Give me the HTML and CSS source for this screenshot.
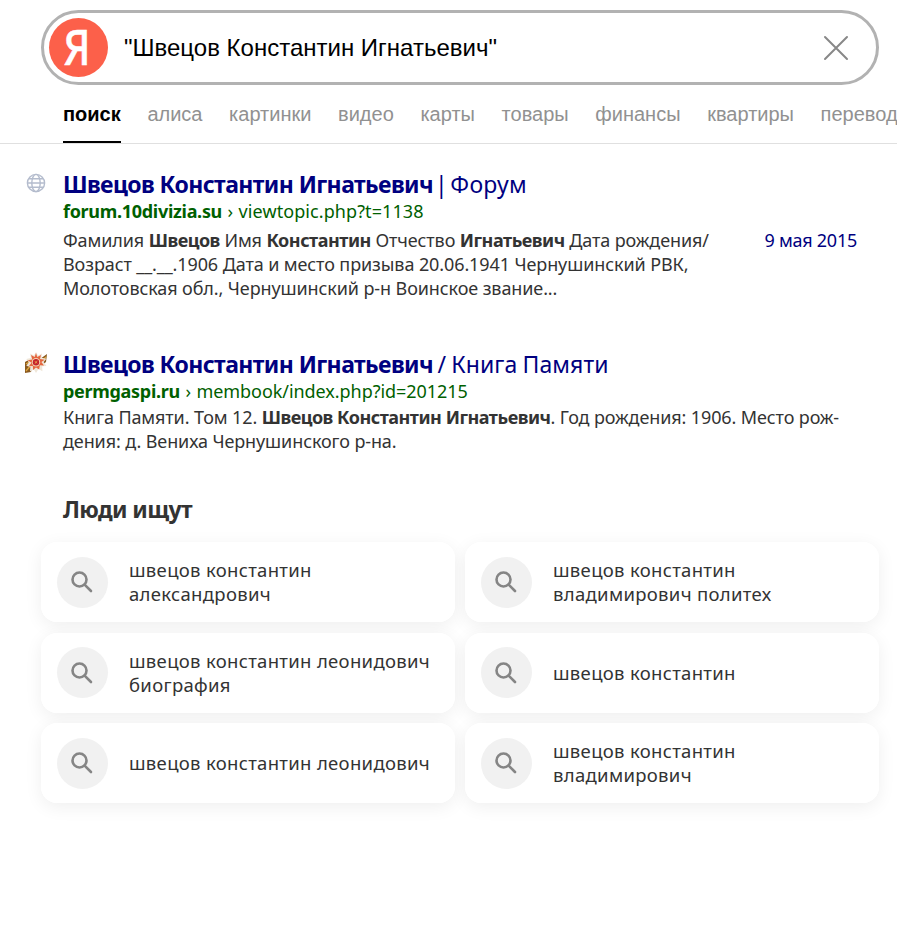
FILE: index.html
```html
<!DOCTYPE html>
<html lang="ru">
<head>
<meta charset="utf-8">
<title>Поиск</title>
<link rel="stylesheet" href="styles.css">
</head>
<body>
<svg width="0" height="0" class="defs"><symbol id="lens" viewBox="0 0 24 24"><circle cx="9.500" cy="9.500" r="7"/><path d="M14.600 14.600 21 21"/></symbol></svg>
<header>
  <div class="search">
    <div class="logo"><span>Я</span></div>
    <div class="query">"Швецов Константин Игнатьевич"</div>
    <svg class="close" viewBox="0 0 26 26"><path d="M2 2 24 24M24 2 2 24"/></svg>
  </div>
  <nav><a class="active">поиск</a><a>алиса</a><a>картинки</a><a>видео</a><a>карты</a><a>товары</a><a>финансы</a><a>квартиры</a><a>перевод</a></nav>
</header>
<main>
  <article class="result">
    <svg class="favicon globe" viewBox="0 0 24 24"><circle cx="12" cy="12" r="8.6"/><ellipse cx="12" cy="12" rx="4.2" ry="8.6"/><path d="M3.500 12h17M5 7.800h14M5 16.200h14"/></svg>
    <div class="body">
      <h2><b>Швецов Константин Игнатьевич</b> <span class="t1">| Форум</span></h2>
      <div class="url"><b>forum.10divizia.su</b><i>›</i><span class="path-a">viewtopic.php?t=1138</span></div>
      <div class="row">
        <p class="snippet"><span class="s1">Фамилия <b>Швецов</b> Имя <b>Константин</b> Отчество <b>Игнатьевич</b> Дата рождения/</span><br><span class="s2">Возраст __.__.1906 Дата и место призыва 20.06.1941 Чернушинский РВК,</span><br><span class="s2">Молотовская обл., Чернушинский р-н Воинское звание...</span></p>
        <time>9 мая 2015</time>
      </div>
    </div>
  </article>
  <article class="result compact">
    <svg class="favicon" viewBox="0 0 24 24">
      <path d="M1 11 6 8l3 6-2 7-6 1zM16 8l7-5-1 8-6 5z" fill="#8a5a20"/>
      <path d="M2 13l5-3M2 20l6-7M17 11l5-5" stroke="#dda53d" stroke-width="1.3"/>
      <path d="M12 1l2 3.500 4-2-.4 4.200 4.700 1-2.700 3.300 2.900 3.900-4.300.4.200 5-3.900-2.300L12 22l-2-3.500L6 20.500l.3-4.500-4-1.300 2.600-3.400L2.200 8l4.600-1-.8-4.500 4 2z" fill="#efe6d8"/>
      <path d="M12 2l1.300 4 3.700-2-1 4 4.700.8-3.300 2.300 2.600 3.300-4.200-.1-.6 4.200L12 16.500l-2.900 2.500-.3-4-4 .2 2.700-3.500L3.700 9.200l4.600-.7-1.300-4.500 3.700 2z" fill="#e5663f"/>
      <circle cx="12" cy="11.300" r="4.200" fill="#f2d7b4"/><circle cx="12" cy="11.300" r="3.200" fill="#c3202c"/>
      <path d="M10.800 12.500l2.500-2.400M11 10.300l2 2" stroke="#f0b14b" stroke-width=".9"/>
    </svg>
    <div class="body">
      <h2><b>Швецов Константин Игнатьевич</b> <span class="t2">/ Книга Памяти</span></h2>
      <div class="url"><b>permgaspi.ru</b><i>›</i><span class="path-b">membook/index.php?id=201215</span></div>
      <p class="snippet"><span class="s1">Книга Памяти. Том 12. <b>Швецов Константин Игнатьевич</b>. Год рождения: 1906. Место рож-</span><br><span class="s2">дения: д. Вениха Чернушинского р-на.</span></p>
    </div>
  </article>
  <h3>Люди ищут</h3>
  <div class="grid">
    <a class="card"><span class="icon"><svg><use href="#lens"/></svg></span><span>швецов константин<br>александрович</span></a>
    <a class="card"><span class="icon"><svg><use href="#lens"/></svg></span><span>швецов константин<br>владимирович политех</span></a>
    <a class="card"><span class="icon"><svg><use href="#lens"/></svg></span><span>швецов константин леонидович<br>биография</span></a>
    <a class="card"><span class="icon"><svg><use href="#lens"/></svg></span><span>швецов константин</span></a>
    <a class="card"><span class="icon"><svg><use href="#lens"/></svg></span><span>швецов константин леонидович</span></a>
    <a class="card"><span class="icon"><svg><use href="#lens"/></svg></span><span>швецов константин<br>владимирович</span></a>
  </div>
</main>
</body>
</html>
```
FILE: styles.css
```css
body{margin:0;min-height:947px;font:18px/24px "Noto Sans",sans-serif;color:#333;background:#fff}
.defs{display:block}
header{display:flow-root;font-family:"Liberation Sans",sans-serif}
.search{margin:10px 18px 0 41px;height:75px;display:flex;align-items:center;border:3px solid #b2b2b2;border-radius:38px;box-sizing:border-box}
.logo{width:59px;height:59px;margin-left:5px;background:#fc604a;border-radius:50%;color:#fff;font:500 49px/57px "Noto Sans",sans-serif;text-align:center}
.logo span{display:inline-block;transform:scaleX(.85);margin-left:-3px;-webkit-text-stroke:.5px #fff}
.query{font-size:24px;margin-left:16px;color:#000}
.close{width:26px;height:26px;margin-left:auto;margin-right:27px;fill:none;stroke:#888;stroke-width:2;stroke-linecap:round}
nav{display:flex;gap:26.65px;height:58px;padding-left:63px;font-size:20px;line-height:58px;color:#919191;border-bottom:1px solid #e0e0e0;white-space:nowrap;overflow:hidden}
.active{font-weight:bold;color:#000;box-shadow:inset 0 -2px #000}
main{padding-top:25px}
.result{display:flex;height:180px;padding-left:24px}
.compact{height:146px}
.favicon{width:24px;height:24px;margin:2px 15px 0 0;flex:none}
.globe{fill:none;stroke:#b4bccd;stroke-width:1.4}
.body{flex:1;white-space:nowrap}
b{letter-spacing:-.3px}
h2{margin:0;font-size:23px;line-height:30px;font-weight:400;color:#000080}
h2 b{letter-spacing:-.58px}
.t1{letter-spacing:.3px;word-spacing:-4px;margin-left:-4px}
.t2{letter-spacing:.1px;word-spacing:-1px;margin-left:-1.500px}
.url{color:#006000}
.url i{font-style:normal;margin:0 5.500px}
.path-a{letter-spacing:.08px}
.path-b{letter-spacing:-.06px}
.row{display:flex;justify-content:space-between;margin:5px 40px 0 0}
.row time{color:#000080;letter-spacing:-.25px}
.snippet{margin:0}
.snippet b{letter-spacing:-.48px}
.compact .snippet{margin-top:2px}
.s1{letter-spacing:-.11px}
.s2{letter-spacing:-.1px}
h3{margin:0 0 19px 63px;font-size:23px;line-height:28px;letter-spacing:-.6px}
.grid{display:grid;grid-template-columns:1fr 1fr;grid-auto-rows:80px;gap:10.5px 10px;margin:0 18px 0 41px;isolation:isolate}
.card{position:relative;display:flex;align-items:center;gap:21px;padding-left:16px;background:#fff;border-radius:16px;font-size:18.5px;letter-spacing:.32px}
.card::before{content:"";position:absolute;inset:0;z-index:-1;border-radius:16px;box-shadow:0 4px 18px rgba(0,0,0,.065)}
.icon{display:flex;align-items:center;justify-content:center;width:51px;height:51px;border-radius:50%;background:#f1f1f1}
.icon svg{width:24px;height:24px;margin-left:-1px;fill:none;stroke:#858585;stroke-width:2.6;stroke-linecap:round}
```
